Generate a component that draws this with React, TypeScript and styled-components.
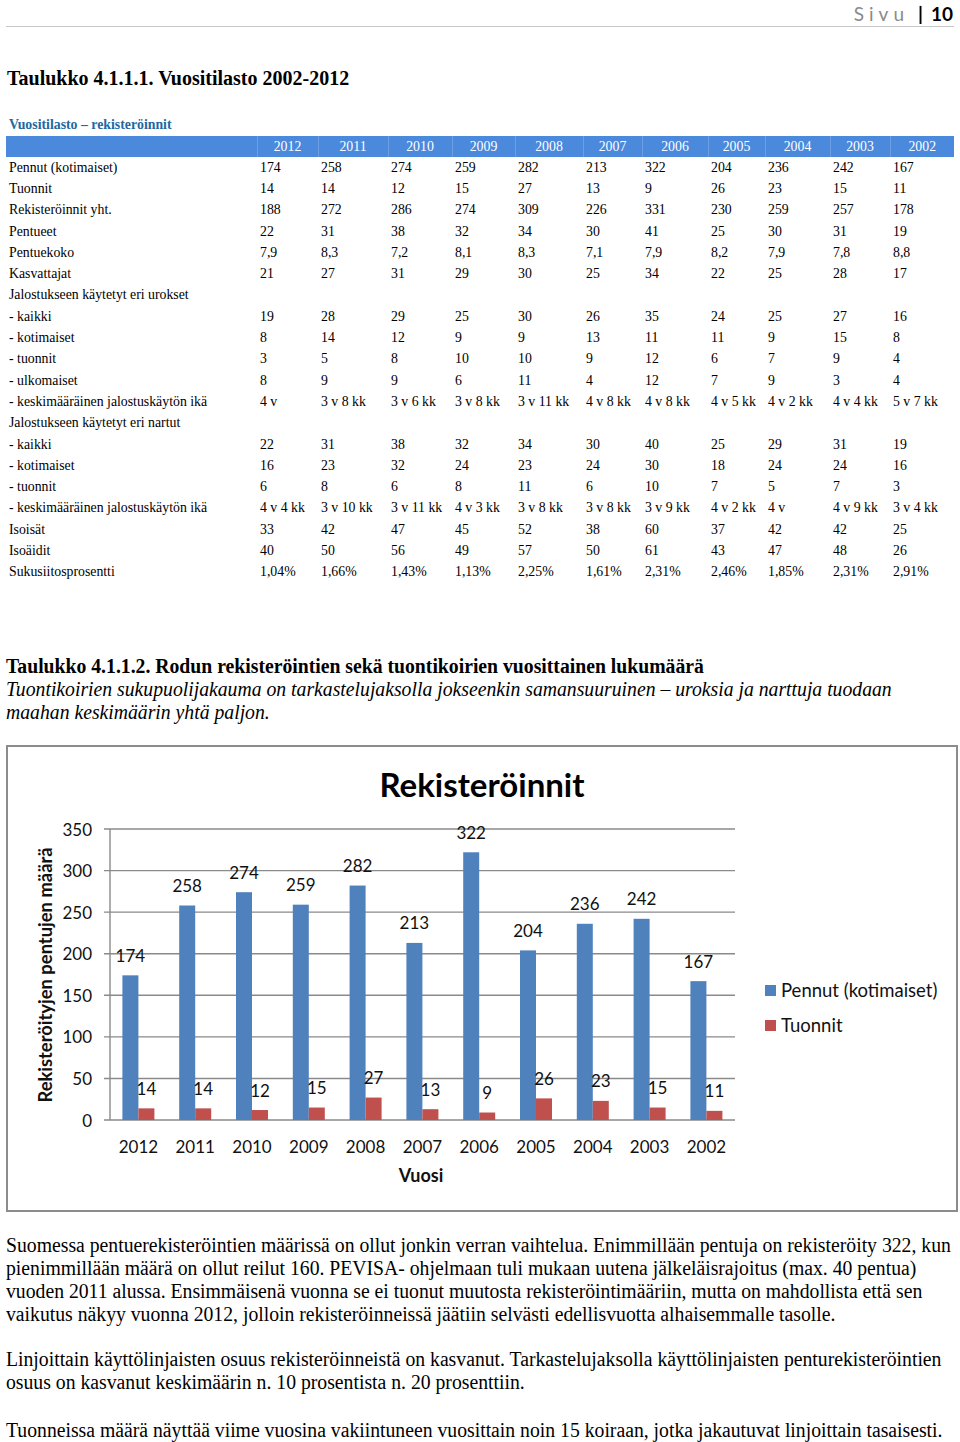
import styled, { createGlobalStyle } from "styled-components";

const GlobalStyle = createGlobalStyle`
  html, body {
    margin: 0;
    padding: 0;
    background: #fff;
  }
  body {
    width: 960px;
    font-family: "Liberation Serif", "Times New Roman", serif;
    color: #000;
  }
`;

const years = [2012, 2011, 2010, 2009, 2008, 2007, 2006, 2005, 2004, 2003, 2002];
const colWidths = [61, 70, 64, 63, 68, 59, 66, 57, 65, 60, 64];

const rows: [string, string[]][] = [
  ["Pennut (kotimaiset)", ["174", "258", "274", "259", "282", "213", "322", "204", "236", "242", "167"]],
  ["Tuonnit", ["14", "14", "12", "15", "27", "13", "9", "26", "23", "15", "11"]],
  ["Rekisteröinnit yht.", ["188", "272", "286", "274", "309", "226", "331", "230", "259", "257", "178"]],
  ["Pentueet", ["22", "31", "38", "32", "34", "30", "41", "25", "30", "31", "19"]],
  ["Pentuekoko", ["7,9", "8,3", "7,2", "8,1", "8,3", "7,1", "7,9", "8,2", "7,9", "7,8", "8,8"]],
  ["Kasvattajat", ["21", "27", "31", "29", "30", "25", "34", "22", "25", "28", "17"]],
  ["Jalostukseen käytetyt eri urokset", []],
  ["- kaikki", ["19", "28", "29", "25", "30", "26", "35", "24", "25", "27", "16"]],
  ["- kotimaiset", ["8", "14", "12", "9", "9", "13", "11", "11", "9", "15", "8"]],
  ["- tuonnit", ["3", "5", "8", "10", "10", "9", "12", "6", "7", "9", "4"]],
  ["- ulkomaiset", ["8", "9", "9", "6", "11", "4", "12", "7", "9", "3", "4"]],
  ["- keskimääräinen jalostuskäytön ikä", ["4 v", "3 v 8 kk", "3 v 6 kk", "3 v 8 kk", "3 v 11 kk", "4 v 8 kk", "4 v 8 kk", "4 v 5 kk", "4 v 2 kk", "4 v 4 kk", "5 v 7 kk"]],
  ["Jalostukseen käytetyt eri nartut", []],
  ["- kaikki", ["22", "31", "38", "32", "34", "30", "40", "25", "29", "31", "19"]],
  ["- kotimaiset", ["16", "23", "32", "24", "23", "24", "30", "18", "24", "24", "16"]],
  ["- tuonnit", ["6", "8", "6", "8", "11", "6", "10", "7", "5", "7", "3"]],
  ["- keskimääräinen jalostuskäytön ikä", ["4 v 4 kk", "3 v 10 kk", "3 v 11 kk", "4 v 3 kk", "3 v 8 kk", "3 v 8 kk", "3 v 9 kk", "4 v 2 kk", "4 v", "4 v 9 kk", "3 v 4 kk"]],
  ["Isoisät", ["33", "42", "47", "45", "52", "38", "60", "37", "42", "42", "25"]],
  ["Isoäidit", ["40", "50", "56", "49", "57", "50", "61", "43", "47", "48", "26"]],
  ["Sukusiitosprosentti", ["1,04%", "1,66%", "1,43%", "1,13%", "2,25%", "1,61%", "2,31%", "2,46%", "1,85%", "2,31%", "2,91%"]],
];

const pennut = [174, 258, 274, 259, 282, 213, 322, 204, 236, 242, 167];
const tuonnit = [14, 14, 12, 15, 27, 13, 9, 26, 23, 15, 11];

// chart geometry (svg units = px)
const UNIT = 0.8314;
const BASE = 317;
const AXIS_X = 102;
const CAT_W = 56.8;
const BAR_W = 16;
const ticks = [0, 50, 100, 150, 200, 250, 300, 350];

// the document text is set a touch narrower than Times
const SX = 0.985;

function App() {
  return (
    <Page>
      <GlobalStyle />
      <PageHeader>
        <SivuLabel>Sivu</SivuLabel>
        <Divider>|</Divider>
        <PageNum>10</PageNum>
      </PageHeader>

      <Heading>Taulukko 4.1.1.1. Vuositilasto 2002-2012</Heading>
      <TableCaption>Vuositilasto – rekisteröinnit</TableCaption>

      <StatTable>
        <colgroup>
          <col style={{ width: 251 }} />
          {colWidths.map((w, i) => (
            <col key={i} style={{ width: w }} />
          ))}
        </colgroup>
        <thead>
          <HeadRow>
            <HeadCell />
            {years.map((y) => (
              <HeadCell key={y}>{y}</HeadCell>
            ))}
          </HeadRow>
        </thead>
        <tbody>
          {rows.map(([label, vals], i) => (
            <BodyRow key={i}>
              <LabelCell>{label}</LabelCell>
              {years.map((y, j) => (
                <ValueCell key={y}>{vals[j] ?? ""}</ValueCell>
              ))}
            </BodyRow>
          ))}
        </tbody>
      </StatTable>

      <SectionTitle>
        <Squeeze $sx={SX}>
          Taulukko 4.1.1.2. Rodun rekisteröintien sekä tuontikoirien vuosittainen lukumäärä
        </Squeeze>
      </SectionTitle>
      <Intro>
        <Squeeze $sx={SX}>
          Tuontikoirien sukupuolijakauma on tarkastelujaksolla jokseenkin samansuuruinen – uroksia ja narttuja tuodaan
        </Squeeze>
        <Squeeze $sx={SX}>maahan keskimäärin yhtä paljon.</Squeeze>
      </Intro>

      <ChartFrame>
        <ChartTitle>Rekisteröinnit</ChartTitle>
        <ChartBody>
          <Plot width={745} height={400} viewBox="0 0 745 400">
            {ticks.map((v) => {
              const y = BASE - v * UNIT;
              return (
                <g key={v}>
                  <line x1={96} x2={727} y1={y} y2={y} stroke="#8a8a8a" strokeWidth={1.4} />
                  <text x={84} y={y} textAnchor="end" dominantBaseline="central">
                    {v}
                  </text>
                </g>
              );
            })}
            <line x1={AXIS_X} x2={AXIS_X} y1={BASE - 350 * UNIT} y2={BASE} stroke="#8a8a8a" strokeWidth={1.4} />
            {years.map((yr, i) => {
              const cx = AXIS_X + CAT_W * (i + 0.5);
              const hb = pennut[i] * UNIT;
              const hr = tuonnit[i] * UNIT;
              return (
                <g key={yr}>
                  <rect x={cx - BAR_W} y={BASE - hb} width={BAR_W} height={hb} fill="#4F81BD" />
                  <rect x={cx} y={BASE - hr} width={BAR_W} height={hr} fill="#C0504D" />
                  <text x={cx - BAR_W / 2} y={BASE - hb - 20} textAnchor="middle" dominantBaseline="central">
                    {pennut[i]}
                  </text>
                  <text x={cx + BAR_W / 2} y={BASE - hr - 20} textAnchor="middle" dominantBaseline="central">
                    {tuonnit[i]}
                  </text>
                  <text x={cx} y={343} textAnchor="middle" dominantBaseline="central">
                    {yr}
                  </text>
                </g>
              );
            })}
            <text x={413} y={372} textAnchor="middle" dominantBaseline="central" fontWeight="bold" fontSize={18}>
              Vuosi
            </text>
            <text
              x={37}
              y={172}
              textAnchor="middle"
              dominantBaseline="central"
              fontWeight="bold"
              fontSize={18.4}
              transform="rotate(-90 37 172)"
            >
              Rekisteröityjen pentujen määrä
            </text>
          </Plot>
          <Legend>
            <LegendItem>
              <Swatch $color="#4F81BD" />
              Pennut (kotimaiset)
            </LegendItem>
            <LegendItem>
              <Swatch $color="#C0504D" />
              Tuonnit
            </LegendItem>
          </Legend>
        </ChartBody>
      </ChartFrame>

      <Para>
        <Squeeze $sx={SX}>
          Suomessa pentuerekisteröintien määrissä on ollut jonkin verran vaihtelua. Enimmillään pentuja on rekisteröity 322, kun
        </Squeeze>
        <Squeeze $sx={SX}>
          pienimmillään määrä on ollut reilut 160. PEVISA- ohjelmaan tuli mukaan uutena jälkeläisrajoitus (max. 40 pentua)
        </Squeeze>
        <Squeeze $sx={SX}>
          vuoden 2011 alussa. Ensimmäisenä vuonna se ei tuonut muutosta rekisteröintimääriin, mutta on mahdollista että sen
        </Squeeze>
        <Squeeze $sx={SX}>
          vaikutus näkyy vuonna 2012, jolloin rekisteröinneissä jäätiin selvästi edellisvuotta alhaisemmalle tasolle.
        </Squeeze>
      </Para>
      <Para $gap={22}>
        <Squeeze $sx={SX}>
          Linjoittain käyttölinjaisten osuus rekisteröinneistä on kasvanut. Tarkastelujaksolla käyttölinjaisten penturekisteröintien
        </Squeeze>
        <Squeeze $sx={SX}>osuus on kasvanut keskimäärin n. 10 prosentista n. 20 prosenttiin.</Squeeze>
      </Para>
      <Para $gap={25}>
        <Squeeze $sx={SX}>
          Tuonneissa määrä näyttää viime vuosina vakiintuneen vuosittain noin 15 koiraan, jotka jakautuvat linjoittain tasaisesti.
        </Squeeze>
      </Para>
    </Page>
  );
}

export default App;

const Page = styled.div`
  width: 960px;
  padding: 0 6px 20px 6px;
  box-sizing: border-box;
`;

const PageHeader = styled.div`
  display: flex;
  justify-content: flex-end;
  align-items: center;
  height: 26px;
  padding-right: 1px;
  border-bottom: 1px solid #c8c8c8;
  font-family: Lato, "Liberation Sans", sans-serif;
  font-size: 19px;
`;

const SivuLabel = styled.span`
  color: #8a8a8a;
  letter-spacing: 5px;
  margin-right: 9px;
`;

const Divider = styled.span`
  font-weight: 700;
  margin-right: 8px;
`;

const PageNum = styled.span`
  font-weight: 700;
  color: #000;
`;

const Heading = styled.h1`
  margin: 39px 0 0 1px;
  font-size: 20px;
  line-height: 24px;
  font-weight: 700;
`;

const TableCaption = styled.div`
  margin: 27px 0 3px 3px;
  font-size: 13.8px;
  line-height: 16px;
  font-weight: 700;
  color: #22689f;
`;

const StatTable = styled.table`
  width: 948px;
  table-layout: fixed;
  border-collapse: collapse;
  font-size: 13.8px;
`;

const HeadRow = styled.tr`
  height: 21px;
  background: #4a89dc;
`;

const HeadCell = styled.th`
  padding: 0;
  font-weight: 400;
  color: #fff;
  text-align: center;
  border-left: 1px solid #6e9fe2;
  &:first-child {
    border-left: none;
  }
`;

const BodyRow = styled.tr`
  height: 21.3px;
`;

const LabelCell = styled.td`
  padding: 0 0 0 3px;
  white-space: nowrap;
`;

const ValueCell = styled.td`
  padding: 0 0 0 3px;
  white-space: nowrap;
`;

const SectionTitle = styled.div`
  margin-top: 72px;
  font-size: 20px;
  line-height: 23px;
  font-weight: 700;
`;

const Intro = styled.div`
  font-size: 20px;
  line-height: 23px;
  font-style: italic;
`;

const Squeeze = styled.span<{ $sx: number }>`
  display: block;
  white-space: nowrap;
  transform: scaleX(${(p) => p.$sx});
  transform-origin: left center;
`;

const ChartFrame = styled.div`
  margin-top: 21px;
  width: 952px;
  height: 467px;
  box-sizing: border-box;
  border: 2px solid #8c8c8c;
  display: flex;
  flex-direction: column;
`;

const ChartTitle = styled.div`
  padding-top: 18px;
  height: 38px;
  line-height: 38px;
  text-align: center;
  font-family: Lato, "Liberation Sans", sans-serif;
  font-weight: 700;
  font-size: 33px;
  color: #000;
`;

const ChartBody = styled.div`
  display: flex;
`;

const Plot = styled.svg`
  display: block;
  flex: none;
  font-family: Lato, "Liberation Sans", sans-serif;
  font-size: 17px;
  fill: #111;
`;

const Legend = styled.div`
  padding-top: 170px;
  margin-left: 12px;
  display: flex;
  flex-direction: column;
`;

const LegendItem = styled.div`
  display: flex;
  align-items: center;
  height: 35px;
  font-family: Lato, "Liberation Sans", sans-serif;
  font-size: 18.5px;
  color: #111;
`;

const Swatch = styled.span<{ $color: string }>`
  width: 11px;
  height: 11px;
  margin-right: 5px;
  background: ${(p) => p.$color};
`;

const Para = styled.div<{ $gap?: number }>`
  margin-top: ${(p) => p.$gap ?? 22}px;
  font-size: 20px;
  line-height: 23px;
`;
